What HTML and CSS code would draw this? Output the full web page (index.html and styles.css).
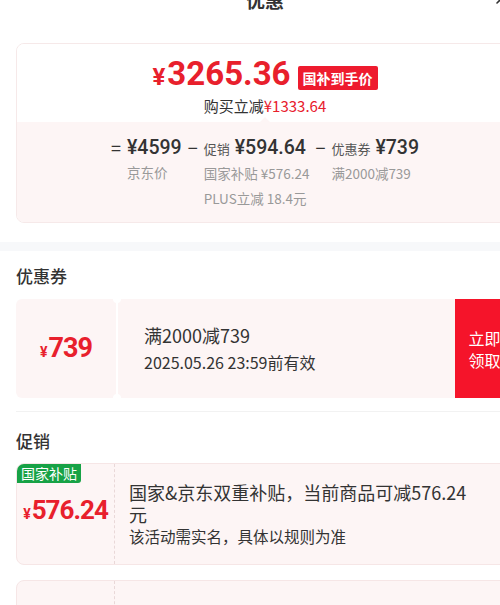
FILE: index.html
```html
<!DOCTYPE html>
<html lang="zh-CN">
<head>
    <meta charset="UTF-8">
    <meta name="viewport" content="width=device-width, initial-scale=1.0">
    <title>优惠</title>
    <link rel="stylesheet" href="styles.css">
</head>
<body>
<div class="page">
    <div class="header">
        <span class="title">优惠</span>
        <svg class="close" width="16" height="16" viewBox="0 0 16 16">
            <path d="M2 2 L14 14 M14 2 L2 14" stroke="#333" stroke-width="1.6" stroke-linecap="round" fill="none"/>
        </svg>
    </div>

    <div class="summary">
        <div class="summary-top">
            <div class="final">
                <span class="amount"><span class="yen">¥</span>3265.36</span>
                <span class="final-tag">国补到手价</span>
            </div>
            <div class="save">购买立减<span class="red">¥1333.64</span></div>
        </div>
        <div class="summary-bottom">
            <div class="part">
                <span class="op">=</span>
                <div class="col">
                    <div class="main-line">¥4599</div>
                    <div class="sub">京东价</div>
                </div>
            </div>
            <div class="part">
                <span class="op">−</span>
                <div class="col">
                    <div class="main-line"><span class="label">促销</span>¥594.64</div>
                    <div class="sub">国家补贴 ¥576.24</div>
                    <div class="sub">PLUS立减 18.4元</div>
                </div>
            </div>
            <div class="part">
                <span class="op">−</span>
                <div class="col">
                    <div class="main-line"><span class="label">优惠券</span>¥739</div>
                    <div class="sub">满2000减739</div>
                </div>
            </div>
        </div>
    </div>

    <div class="band"></div>

    <div class="section">
        <h2>优惠券</h2>
        <div class="coupon">
            <div class="coupon-left"><span class="small-yen">¥</span><span class="coupon-num">739</span></div>
            <div class="coupon-main">
                <div class="coupon-title">满2000减739</div>
                <div class="coupon-date">2025.05.26 23:59前有效</div>
            </div>
            <div class="coupon-btn">立即<br>领取</div>
        </div>
    </div>

    <div class="divider"></div>

    <div class="section">
        <h2 class="promo-head">促销</h2>
        <div class="promo">
            <span class="green-tag">国家补贴</span>
            <div class="promo-left"><span class="small-yen">¥</span><span class="promo-num">576.24</span></div>
            <div class="promo-right">
                <div class="promo-title">国家&amp;京东双重补贴，当前商品可减576.24元</div>
                <div class="promo-desc">该活动需实名，具体以规则为准</div>
            </div>
        </div>
        <div class="promo promo-next">
            <div class="promo-left"><span class="small-yen">¥</span><span class="promo-num">18.4</span></div>
            <div class="promo-right">
                <div class="promo-title">PLUS会员专享，立减18.4元</div>
                <div class="promo-desc">仅限PLUS会员使用</div>
            </div>
        </div>
    </div>
</div>
</body>
</html>
```

FILE: styles.css
```css
body {
    margin: 0;
    background-color: #fff;
    font-family: "Noto Sans CJK SC", "Noto Sans", sans-serif;
    color: #333;
    overflow: hidden;
}
.page {
    width: 530px;
    margin-top: -23px;
}
.header {
    height: 44px;
    display: flex;
    align-items: center;
    justify-content: center;
    position: relative;
}
.title {
    font-size: 19px;
    font-weight: 700;
    color: #333;
}
.close {
    position: absolute;
    right: 19px;
    top: 12px;
}

/* price summary */
.summary {
    margin: 22px 16px 0;
    border: 1px solid #f6e9e9;
    border-radius: 8px;
    overflow: hidden;
}
.summary-top {
    padding: 11px 0 6px;
    text-align: center;
    background-color: #fff;
}
.final {
    display: flex;
    justify-content: center;
    align-items: flex-end;
}
.amount {
    font-family: Roboto, sans-serif;
    font-weight: 700;
    font-size: 33px;
    line-height: 38px;
    color: #e8202c;
}
.yen {
    font-size: 24px;
    margin-right: 2px;
}
.final-tag {
    margin: 0 0 6px 7px;
    padding: 0 5px;
    background-color: #ee1b2e;
    color: #fff;
    font-size: 14px;
    font-weight: 700;
    line-height: 24px;
    border-radius: 2px;
}
.save {
    font-size: 15px;
    line-height: 20px;
    color: #333;
}
.red {
    color: #e8202c;
}
.summary-bottom {
    position: relative;
    display: flex;
    justify-content: center;
    gap: 6px;
    padding: 13px 0 11px;
    background-color: #fdf5f5;
}
.summary-bottom::before {
    content: "";
    position: absolute;
    top: -10px;
    left: 50%;
    margin-left: -5px;
    border: 5px solid transparent;
    border-bottom-color: #fdf5f5;
}
.part {
    display: flex;
}
.op {
    font-size: 18px;
    line-height: 25px;
    color: #333;
    margin-right: 6px;
}
.col {
    display: flex;
    flex-direction: column;
}
.main-line {
    font-family: Roboto, sans-serif;
    font-size: 19.5px;
    font-weight: 500;
    line-height: 25px;
    color: #333;
}
.label {
    font-family: "Noto Sans CJK SC", sans-serif;
    font-size: 13px;
    font-weight: 400;
    margin-right: 5px;
    color: #555;
}
.sub {
    font-size: 13.5px;
    line-height: 25px;
    color: #999;
}
.band {
    height: 9px;
    margin-top: 19px;
    background-color: #f7f8fa;
}

/* sections */
.section {
    padding: 0 16px;
}
h2 {
    margin: 13px 0 11px;
    font-size: 17px;
    font-weight: 500;
    line-height: 24px;
    color: #333;
}
.coupon {
    display: flex;
    height: 99px;
}
.coupon-left {
    position: relative;
    width: 100px;
    display: flex;
    align-items: baseline;
    justify-content: center;
    padding-top: 33px;
    box-sizing: border-box;
    background-color: #fdf5f5;
    border-radius: 6px 0 0 6px;
    color: #e8202c;
}
.coupon-left::before,
.coupon-left::after {
    content: "";
    position: absolute;
    right: -5px;
    width: 8px;
    height: 8px;
    border-radius: 50%;
    background-color: #fff;
    z-index: 1;
}
.coupon-left::before {
    top: -4px;
}
.coupon-left::after {
    bottom: -4px;
}
.small-yen {
    font-family: Roboto, sans-serif;
    font-weight: 700;
    font-size: 14px;
    margin-right: 1px;
}
.coupon-num {
    font-family: Roboto, sans-serif;
    font-weight: 700;
    font-size: 27px;
    letter-spacing: -1px;
}
.coupon-main {
    flex: 1;
    display: flex;
    flex-direction: column;
    justify-content: center;
    gap: 3px;
    margin-left: 2px;
    padding-left: 26px;
    background-color: #fdf5f5;
}
.coupon-title {
    font-size: 18px;
    line-height: 24px;
    color: #333;
}
.coupon-date {
    font-size: 16px;
    line-height: 24px;
    color: #333;
}
.coupon-btn {
    width: 59px;
    display: flex;
    align-items: center;
    justify-content: center;
    text-align: center;
    background-color: #f5142a;
    color: #fff;
    font-size: 16px;
    line-height: 22px;
}
.divider {
    height: 1px;
    margin: 13px 16px 0;
    background-color: #f2f2f2;
}
.promo-head {
    margin: 17px 0 10px;
}
.promo {
    position: relative;
    display: flex;
    min-height: 99px;
    background-color: #fdf5f5;
    border: 1px solid #f6e6e6;
    border-radius: 8px;
    overflow: hidden;
}
.green-tag {
    position: absolute;
    top: 0;
    left: 0;
    padding: 0 4px;
    background-color: #17a246;
    color: #fff;
    font-size: 14px;
    line-height: 19px;
    border-radius: 0 0 3px 0;
}
.promo-left {
    width: 98px;
    display: flex;
    align-items: baseline;
    justify-content: center;
    padding-top: 31px;
    box-sizing: border-box;
    border-right: 1px dashed #e9d8d8;
    color: #e8202c;
}
.promo-num {
    font-family: Roboto, sans-serif;
    font-weight: 700;
    font-size: 26px;
    letter-spacing: -1px;
}
.promo-right {
    flex: 1;
    display: flex;
    flex-direction: column;
    justify-content: center;
    padding: 17px 40px 17px 14px;
}
.promo-title {
    font-size: 18px;
    line-height: 22px;
    color: #333;
}
.promo-desc {
    font-size: 15.5px;
    line-height: 22px;
    color: #333;
}
.promo-next {
    margin-top: 15px;
}
```
